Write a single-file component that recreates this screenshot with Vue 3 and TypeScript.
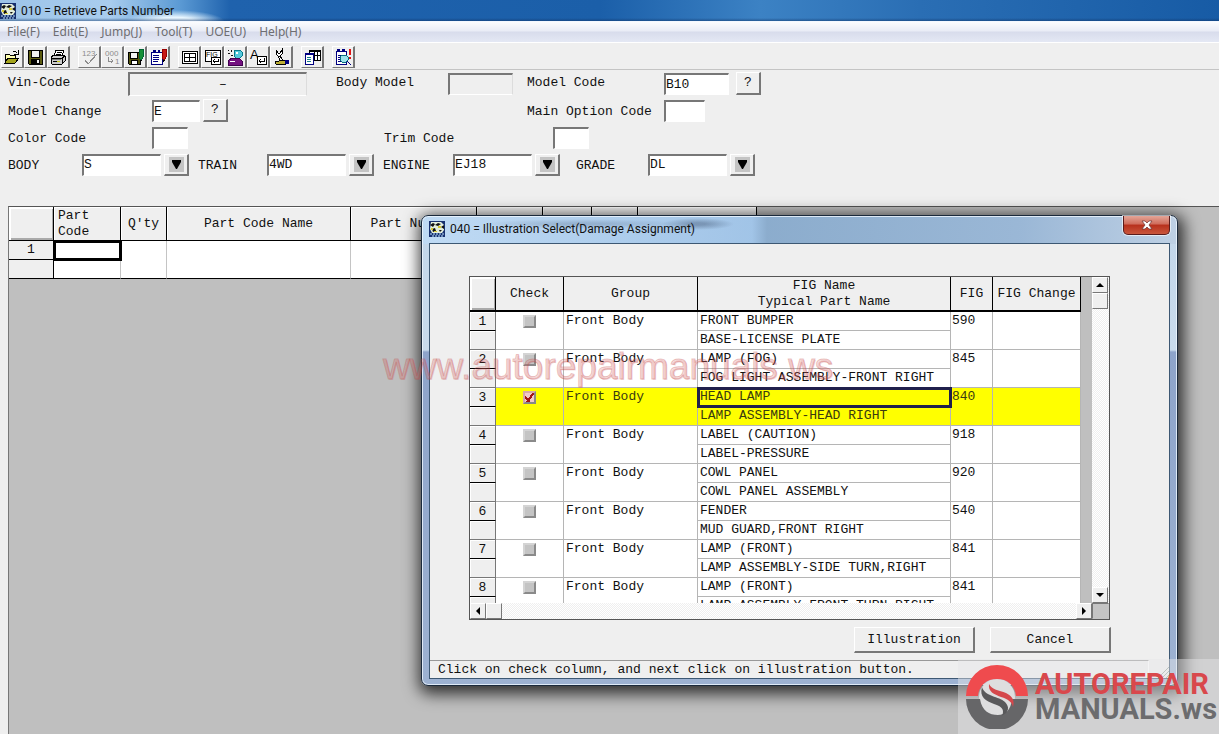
<script setup lang="ts">
import { ref } from 'vue'

interface Shape {
  d?: string
  fill?: string
  stroke?: string
  text?: string
  x?: number
  y?: number
  size?: number
}
interface Tool {
  name: string
  disabled?: boolean
  shapes: Shape[]
}
interface Fig {
  group: string
  name: string
  part: string
  fig: string
  checked: boolean
}

const menus = ['File(F)', 'Edit(E)', 'Jump(J)', 'Tool(T)', 'UOE(U)', 'Help(H)']

const toolGroups: Tool[][] = [
  [
    {
      name: 'Open',
      shapes: [
        { d: 'M1 14V5h4l1 1h5v3', fill: '#ffffb0', stroke: '#000' },
        { d: 'M1 14L4 9h11l-4 5z', fill: '#a3a31c', stroke: '#000' },
        { d: 'M9 3q2-2 4 1M14 1v4h-4', fill: 'none', stroke: '#000' },
      ],
    },
    {
      name: 'Save',
      shapes: [
        { d: 'M1 1h14v14H2l-1-1z', fill: '#5c5c10', stroke: '#000' },
        { d: 'M4 1h8v7H4z', fill: '#efefef', stroke: '#000' },
        { d: 'M4 10h9v5H4z', fill: '#000' },
        { d: 'M10 11h2v3h-2z', fill: '#efefef' },
      ],
    },
    {
      name: 'Print',
      shapes: [
        { d: 'M4 7L6 1h8l-2 6z', fill: '#fff', stroke: '#000' },
        { d: 'M7 3h5M6 5h5', stroke: '#000' },
        { d: 'M1 8l3-2h9l2 1v5l-3 3H2l-1-2z', fill: '#ccc', stroke: '#000' },
        { d: 'M1 9h11v5M12 9l3-2M3 12h7', fill: 'none', stroke: '#000' },
        { d: 'M2 10h9v1H2z', fill: '#777' },
        { d: 'M7 12h3v1H7z', fill: '#c8c818' },
      ],
    },
  ],
  [
    {
      name: 'Check numbers',
      disabled: true,
      shapes: [
        { text: '123', x: 1, y: 7, size: 8, fill: '#8c8c8c' },
        { d: 'M4 11l3 4 9-10', fill: 'none', stroke: '#8c8c8c' },
      ],
    },
    {
      name: 'Replace numbers',
      disabled: true,
      shapes: [
        { text: '000', x: 1, y: 7, size: 8, fill: '#8c8c8c' },
        { d: 'M4 8v4h5M7 10l2 2-2 2', fill: 'none', stroke: '#8c8c8c' },
        { text: '1', x: 11, y: 15, size: 8, fill: '#8c8c8c' },
      ],
    },
    {
      name: 'Save list',
      shapes: [
        { d: 'M1 3h12v12H2l-1-1z', fill: '#53530c', stroke: '#000' },
        { d: 'M3 3h7v6H3z', fill: '#f4f4f4', stroke: '#000' },
        { d: 'M4 11h6v4H4z', fill: '#fff', stroke: '#000' },
        { d: 'M12 0h4v8l-2 4-2-4z', fill: '#168f36', stroke: '#063' },
        { d: 'M13 11h2l-1 3z', fill: '#000' },
      ],
    },
    {
      name: 'Edit list',
      shapes: [
        { d: 'M1 3h11v12H1z', fill: '#fff', stroke: '#000080' },
        { d: 'M3 1h3v3H3zM8 1h2v3H8z', fill: '#000080' },
        { d: 'M3 6h6M3 8h6M3 10h6M3 12h5', stroke: '#000080' },
        { d: 'M12 0h4v8l-2 4-2-4z', fill: '#c81818', stroke: '#900' },
        { d: 'M13 11h2l-1 3z', fill: '#000' },
      ],
    },
  ],
  [
    {
      name: 'Grid',
      shapes: [
        { d: 'M1 2h15v12H1z', fill: '#fff', stroke: '#000' },
        { d: 'M3 4h11v8H3zM8 4v8M3 8h11', fill: 'none', stroke: '#000' },
      ],
    },
    {
      name: 'Figure index',
      shapes: [
        { d: 'M1 1h15v11H1z', fill: '#fff', stroke: '#000' },
        { text: 'FIG', x: 2, y: 8, size: 7, fill: '#000' },
        { d: 'M7 8h9v7H7z', fill: '#fff', stroke: '#000' },
        { d: 'M14 10v2H9M11 10l-2 2 2 2', fill: 'none', stroke: '#000' },
      ],
    },
    {
      name: 'Search',
      shapes: [
        { d: 'M1 1l1 1M4 1l1 2M1 5l2-1M4 6l2 1', stroke: '#111' },
        { d: 'M8 1h5l2 2v4l-2 2H9L7 7V3z', fill: '#55c8dc', stroke: '#087b8c' },
        { d: 'M9 3h2v2H9z', fill: '#fff' },
        { d: 'M1 12l4-3h7l3 3v4H1z', fill: '#741180', stroke: '#400050' },
        { d: 'M3 12h5', stroke: '#fff' },
      ],
    },
    {
      name: 'Name entry',
      shapes: [
        { text: 'A', x: 0, y: 10, size: 13, fill: '#000' },
        { d: 'M7 7h9v8H7z', fill: '#fff', stroke: '#000' },
        { d: 'M14 9v3H9M11 10l-2 2 2 2', fill: 'none', stroke: '#000' },
      ],
    },
    {
      name: 'Repair',
      shapes: [
        { d: 'M3 1v4l2 2h2l2-2V1L7 4H5zM5 7l3 6h3L7 7', fill: '#fff', stroke: '#000' },
        { d: 'M2 12h4l3-1 3 1v3H3z', fill: '#bcae35', stroke: '#000' },
        { d: 'M12 11h4v4h-4z', fill: '#00007c' },
      ],
    },
  ],
  [
    {
      name: 'Copy table',
      shapes: [
        { d: 'M5 1h11v10H5z', fill: '#fff', stroke: '#000' },
        { d: 'M5 2h11M8 6h8M10 2v9M13 2v9', stroke: '#000' },
        { d: 'M1 4h8v11H1z', fill: '#fff', stroke: '#000080' },
        { d: 'M1 5h8', stroke: '#000080' },
        { d: 'M3 8h4M3 10h4M3 12h4', stroke: '#187e89' },
      ],
    },
  ],
  [
    {
      name: 'Find',
      shapes: [
        { d: 'M1 2h10v13H1z', fill: '#fff', stroke: '#000080' },
        { d: 'M2 0h3v3H2zM7 0h3v3H7z', fill: '#000080' },
        { d: 'M3 6h3M3 8h2M3 10h2M3 12h3', stroke: '#000080' },
        { d: 'M7 6h4l2 2v3l-2 2H7l-2-2V8z', fill: '#9de2ec', stroke: '#08717c' },
        { d: 'M12 12l4 4', stroke: '#000080' },
        { d: 'M14 0h2v6h-2zM14 8h2v2h-2z', fill: '#e01414' },
      ],
    },
  ],
]

const selectors = [
  { id: 'body', label: 'BODY', value: 'S' },
  { id: 'train', label: 'TRAIN', value: '4WD' },
  { id: 'engine', label: 'ENGINE', value: 'EJ18' },
  { id: 'grade', label: 'GRADE', value: 'DL' },
]

const figs = ref<Fig[]>([
  { group: 'Front Body', name: 'FRONT BUMPER', part: 'BASE-LICENSE PLATE', fig: '590', checked: false },
  { group: 'Front Body', name: 'LAMP (FOG)', part: 'FOG LIGHT ASSEMBLY-FRONT RIGHT', fig: '845', checked: false },
  { group: 'Front Body', name: 'HEAD LAMP', part: 'LAMP ASSEMBLY-HEAD RIGHT', fig: '840', checked: true },
  { group: 'Front Body', name: 'LABEL (CAUTION)', part: 'LABEL-PRESSURE', fig: '918', checked: false },
  { group: 'Front Body', name: 'COWL PANEL', part: 'COWL PANEL ASSEMBLY', fig: '920', checked: false },
  { group: 'Front Body', name: 'FENDER', part: 'MUD GUARD,FRONT RIGHT', fig: '540', checked: false },
  { group: 'Front Body', name: 'LAMP (FRONT)', part: 'LAMP ASSEMBLY-SIDE TURN,RIGHT', fig: '841', checked: false },
  { group: 'Front Body', name: 'LAMP (FRONT)', part: 'LAMP ASSEMBLY-FRONT TURN,RIGHT', fig: '841', checked: false },
])
</script>

<template>
  <div class="app">
    <header class="titlebar">
      <svg class="app-icon" viewBox="0 0 16 16" aria-hidden="true">
        <path d="M0 0h16v16H0z" fill="#17306e" />
        <path d="M2 1h10l3 3v5l-2 3H3L1 8z" fill="#e4eedc" />
        <path d="M1 4l3-2 2 1-2 3zM6 4l3-2 3 1-3 2zM12 6l3-2v4zM3 8l3-1 1 3-3 1zM10 9h3l-2 2z" fill="#111" />
        <path d="M2 7h2v2H2zM9 5h3v2H9zM5 10h3v1H5z" fill="#d7c832" />
        <path d="M1 13h14M3 15h11" stroke="#bfe3ff" stroke-dasharray="2 1" />
      </svg>
      <h1>010 = Retrieve Parts Number</h1>
    </header>

    <nav class="menubar">
      <button v-for="m in menus" :key="m" type="button">{{ m }}</button>
    </nav>

    <div class="toolbar">
      <div v-for="(group, gi) in toolGroups" :key="gi" class="tool-group">
        <button
          v-for="tool in group"
          :key="tool.name"
          type="button"
          class="tool"
          :aria-label="tool.name"
          :disabled="tool.disabled"
        >
          <svg viewBox="0 0 17 17" aria-hidden="true">
            <template v-for="(s, si) in tool.shapes" :key="si">
              <text v-if="s.text" :x="s.x" :y="s.y" :font-size="s.size" :fill="s.fill">{{ s.text }}</text>
              <path v-else :d="s.d" :fill="s.fill ?? 'none'" :stroke="s.stroke ?? 'none'" />
            </template>
          </svg>
        </button>
      </div>
    </div>

    <form class="criteria" @submit.prevent>
      <div class="row row-vin">
        <label for="vin">Vin-Code</label>
        <input id="vin" class="field wide" value="–" readonly />
        <label for="bodymodel">Body Model</label>
        <input id="bodymodel" class="field" readonly />
        <label for="modelcode">Model Code</label>
        <input id="modelcode" class="field" value="B10" />
        <button type="button" class="ask" aria-label="Look up model code">?</button>
      </div>
      <div class="row row-change">
        <label for="change">Model Change</label>
        <input id="change" class="field short" value="E" />
        <button type="button" class="ask" aria-label="Look up model change">?</button>
        <label for="option">Main Option Code</label>
        <input id="option" class="field tiny" />
      </div>
      <div class="row row-color">
        <label for="color">Color Code</label>
        <input id="color" class="field mini" />
        <label for="trim">Trim Code</label>
        <input id="trim" class="field mini" />
      </div>
      <div class="row row-select">
        <template v-for="s in selectors" :key="s.id">
          <label :for="s.id">{{ s.label }}</label>
          <div class="combo">
            <select :id="s.id" class="field">
              <option>{{ s.value }}</option>
            </select>
            <button type="button" :aria-label="`Open ${s.label}`">
              <svg viewBox="0 0 15 15" aria-hidden="true"><path d="M3 3h9v2L8 12H7L3 5z" /></svg>
            </button>
          </div>
        </template>
      </div>
    </form>

    <main class="workspace">
      <table class="parts">
        <colgroup>
          <col class="p-num" /><col class="p-code" /><col class="p-qty" /><col class="p-name" />
          <col class="p-number" /><col class="p-a" /><col class="p-b" /><col class="p-c" /><col class="p-d" />
        </colgroup>
        <thead>
          <tr>
            <th class="corner"></th>
            <th class="left">Part<br />Code</th>
            <th>Q'ty</th>
            <th>Part Code Name</th>
            <th>Part Number</th>
            <th></th>
            <th></th>
            <th></th>
            <th></th>
          </tr>
        </thead>
        <tbody>
          <tr v-for="r in 2" :key="r">
            <th>{{ r === 1 ? '1' : '' }}</th>
            <td v-for="c in 8" :key="c" :class="{ current: r === 1 && c === 1 }"></td>
          </tr>
        </tbody>
      </table>
    </main>

    <section class="dialog" role="dialog" aria-labelledby="dlg-title">
      <header class="dialog-title">
        <svg class="app-icon" viewBox="0 0 16 16" aria-hidden="true">
          <path d="M0 0h16v16H0z" fill="#17306e" />
          <path d="M2 1h10l3 3v5l-2 3H3L1 8z" fill="#e4eedc" />
          <path d="M1 4l3-2 2 1-2 3zM6 4l3-2 3 1-3 2zM12 6l3-2v4zM3 8l3-1 1 3-3 1zM10 9h3l-2 2z" fill="#111" />
          <path d="M2 7h2v2H2zM9 5h3v2H9zM5 10h3v1H5z" fill="#d7c832" />
          <path d="M1 13h14M3 15h11" stroke="#bfe3ff" stroke-dasharray="2 1" />
        </svg>
        <h2 id="dlg-title">040 = Illustration Select(Damage Assignment)</h2>
        <button type="button" class="close" aria-label="Close">
          <svg viewBox="0 0 12 10" aria-hidden="true">
            <path d="M1 1h3l2 2 2-2h3L8 5l3 4H8L6 7 4 9H1l3-4z" fill="#fff" stroke="#6b3030" stroke-width=".7" />
          </svg>
        </button>
      </header>

      <div class="client">
        <div class="list">
          <div class="viewport">
            <table class="figs">
              <colgroup>
                <col class="f-num" /><col class="f-check" /><col class="f-group" />
                <col class="f-name" /><col class="f-fig" /><col class="f-change" />
              </colgroup>
              <thead>
                <tr>
                  <th class="corner"></th>
                  <th>Check</th>
                  <th>Group</th>
                  <th class="two-line">FIG Name<br />Typical Part Name</th>
                  <th>FIG</th>
                  <th>FIG Change</th>
                </tr>
              </thead>
              <tbody v-for="(f, i) in figs" :key="i" :class="{ marked: f.checked }">
                <tr>
                  <th class="num">{{ i + 1 }}</th>
                  <td rowspan="2" class="check">
                    <input v-model="f.checked" type="checkbox" :aria-label="`Check ${f.name}`" />
                  </td>
                  <td rowspan="2" class="group">{{ f.group }}</td>
                  <td class="name">{{ f.name }}</td>
                  <td rowspan="2" class="fig">{{ f.fig }}</td>
                  <td rowspan="2"></td>
                </tr>
                <tr>
                  <th></th>
                  <td class="name part">{{ f.part }}</td>
                </tr>
              </tbody>
            </table>
          </div>
          <div class="vbar">
            <button type="button" aria-label="Scroll up"><svg viewBox="0 0 8 8"><path d="M0 6h8L4 2z" /></svg></button>
            <span class="thumb"></span>
            <button type="button" class="end" aria-label="Scroll down"><svg viewBox="0 0 8 8"><path d="M0 2h8L4 6z" /></svg></button>
          </div>
          <div class="hbar">
            <button type="button" aria-label="Scroll left"><svg viewBox="0 0 8 8"><path d="M6 0v8L2 4z" /></svg></button>
            <span class="thumb"></span>
            <button type="button" class="end" aria-label="Scroll right"><svg viewBox="0 0 8 8"><path d="M2 0v8l4-4z" /></svg></button>
          </div>
          <div class="size-corner"></div>
        </div>
        <div class="actions">
          <button type="button">Illustration</button>
          <button type="button">Cancel</button>
        </div>
        <footer class="status">
          <p>Click on check column, and next click on illustration button.</p>
          <svg viewBox="0 0 12 12" aria-hidden="true"><path d="M1 12L12 1M5 12l7-7M9 12l3-3" stroke="#9aa89f" fill="none" /></svg>
        </footer>
      </div>
    </section>

    <div class="watermark">www.autorepairmanuals.ws</div>
    <div class="brand">
      <svg viewBox="0 0 64 64" aria-hidden="true">
        <circle cx="32" cy="32" r="18" fill="#dededf" />
        <path d="M1 31a31 31 0 0 1 62 0H51C50 20 42 14 32 14S14 20 13 31z" fill="#ef4b4e" />
        <path d="M1 34h14c2 12 9 16 18 16 7 0 13-5 14-16h16a31 31 0 0 1-62 0z" fill="#666668" />
        <path d="M17 22c-3 10 4 14 12 17 6 2 9 4 9 8 0 3-2 4-2 4 8-3 9-9 4-14-6-6-20-5-23-15z" fill="#59595b" />
        <path d="M24 19c-1 8 5 10 12 13 7 2 11 5 12 10 2-7-1-11-7-14-7-3-14-3-17-9z" fill="#d5484c" />
      </svg>
      <p><span class="auto">AUTOREPAIR</span><span class="manuals">MANUALS.ws</span></p>
    </div>
  </div>
</template>

<style>
html,
body {
  margin: 0;
  background: #efefef;
}
</style>

<style scoped>
* {
  box-sizing: border-box;
}
.app {
  position: relative;
  display: flex;
  flex-direction: column;
  min-height: 100vh;
  overflow: hidden;
  background: #efefef;
  color: #111;
  font: 13px/16px 'Liberation Mono', 'Courier New', monospace;
}
button,
input,
select {
  margin: 0;
  padding: 0;
  border-radius: 0;
  color: inherit;
  font: inherit;
}
h1,
h2,
p {
  margin: 0;
  font-weight: 400;
}
.titlebar {
  display: flex;
  align-items: center;
  gap: 5px;
  height: 22px;
  border-bottom: 1px solid #f4f8ff;
  background:
    linear-gradient(transparent 18px, rgba(15, 50, 100, 0.5)),
    radial-gradient(ellipse 50px 12px at 175px 22px, #e8f6ff 40%, transparent),
    linear-gradient(90deg, #9cc3e8 0, #a9cdee 110px, #5b9ad4 180px, #1f62ad 230px, #1b5fa9 600px, #3c82c4 760px, #2a6eb4 920px, #175ba5 100%);
}
.app-icon {
  width: 16px;
  height: 16px;
}
.menubar {
  display: flex;
  gap: 13px;
  align-items: center;
  height: 20px;
  padding: 0 7px;
  background: linear-gradient(#fbfcfe, #e9ecf6 45%, #d8dcec 50%, #e4e8f4);
  font: 12px/16px 'Noto Sans', 'Open Sans', sans-serif;
}
h1,
h2 {
  font: 12px/16px Roboto, 'Open Sans', sans-serif;
}
.menubar button {
  border: 0;
  background: none;
  color: #6e6e72;
}
.toolbar {
  display: flex;
  gap: 8px;
  height: 28px;
  padding: 3px 0 0 1px;
  border-top: 1px solid #fff;
  border-bottom: 1px solid #c4c4c4;
}
.tool-group {
  display: flex;
}
.tool {
  display: flex;
  align-items: center;
  justify-content: center;
  width: 23px;
  height: 22px;
  border: 1px solid;
  border-color: #fff #777 #777 #fff;
  border-right-width: 2px;
  background: #efefef;
}
.tool svg {
  width: 17px;
  height: 17px;
  overflow: visible;
  shape-rendering: crispEdges;
}
.tool text {
  font-family: 'Liberation Sans', Arial, sans-serif;
}

.criteria {
  height: 136px;
}
.row {
  display: grid;
  align-items: center;
  justify-items: start;
  height: 27px;
  padding-left: 8px;
}
.row label {
  padding-top: 2px;
  white-space: nowrap;
}
.row-vin label {
  padding: 0 0 2px;
}
.row-vin {
  grid-template-columns: 120px 208px 112px 79px 137px 72px 25px;
}
.row-change {
  grid-template-columns: 144px 51px 324px 137px 41px;
}
.row-color {
  grid-template-columns: 144px 232px 169px 36px;
}
.row-select {
  grid-template-columns: 74px 116px 69px 116px 70px 123px 72px 107px;
}
.field {
  width: 65px;
  height: 22px;
  border: 1px solid;
  border-color: #777 #fff #fff #777;
  border-top-width: 2px;
  border-left-width: 2px;
  outline: 0;
  background: #fff;
}
.field[readonly] {
  background: #efefef;
  border-right-color: #dcdcdc;
}
.field.wide {
  width: 179px;
  height: 24px;
  padding-left: 10px;
  text-align: center;
}
.field.short {
  width: 48px;
}
.field.tiny {
  width: 41px;
}
.field.mini {
  width: 36px;
}
.ask {
  width: 25px;
  height: 23px;
  border: 1px solid;
  border-color: #fff #777 #777 #fff;
  border-right-width: 2px;
  border-bottom-width: 2px;
  background: #efefef;
}
.combo {
  display: flex;
  gap: 3px;
}
.combo select {
  width: 79px;
  appearance: none;
}
.combo button {
  display: flex;
  align-items: center;
  justify-content: center;
  width: 25px;
  height: 22px;
  border: 1px solid;
  border-color: #fff #777 #777 #fff;
  border-right-width: 2px;
  border-bottom-width: 2px;
  background: #efefef;
}
.combo svg {
  width: 15px;
  height: 15px;
  background: #c4c4c4;
}

.workspace {
  flex: 1;
  margin-left: 8px;
  border-top: 1px solid #555;
  border-left: 1px solid #777;
  background: #bfbfbf;
}
table {
  border-spacing: 0;
  table-layout: fixed;
}
th,
td {
  padding: 0;
  font-weight: 400;
}
.parts {
  width: 748px;
}
.p-num { width: 45px; }
.p-code { width: 67px; }
.p-qty { width: 46px; }
.p-name { width: 184px; }
.p-number { width: 126px; }
.p-a { width: 66px; }
.p-b { width: 49px; }
.p-c { width: 46px; }
.p-d { width: 119px; }
.parts th {
  height: 19px;
  border-right: 1px solid #000;
  border-bottom: 1px solid #000;
  background: #efefef;
}
.parts thead th {
  height: 34px;
  box-shadow: inset 1px 1px #fff;
}
.parts th.left {
  padding: 1px 0 0 4px;
  text-align: left;
}
.parts td {
  border-right: 1px solid #c4c4c4;
  background: #fff;
}
.parts tr:last-child td {
  border-bottom: 1px solid #000;
}
.parts thead .corner,
.figs thead .corner {
  box-shadow: inset 2px 2px #fff, inset -1px -2px #aaa;
}
.parts .current {
  outline: 3px solid #000;
  outline-offset: -2px;
}

.dialog {
  position: absolute;
  top: 215px;
  left: 421px;
  width: 757px;
  padding: 0 7px 6px;
  border: 1px solid #1b2a3c;
  border-radius: 7px;
  background:
    radial-gradient(ellipse 36px 6px at 276px 8px, rgba(70, 90, 120, 0.45) 20%, transparent) 0 0 / 100% 28px no-repeat,
    radial-gradient(ellipse 100px 5px at 160px 8px, rgba(70, 90, 120, 0.25) 20%, transparent) 0 0 / 100% 28px no-repeat,
    linear-gradient(90deg, rgba(190, 220, 248, 0.7) 0, rgba(150, 190, 230, 0.75) 330px, rgba(130, 165, 200, 0.85) 345px, rgba(150, 180, 212, 0.9) 600px, rgba(190, 208, 228, 0.95) 100%) 0 0 / 100% 28px no-repeat,
    linear-gradient(#c2d6ea 0, #c9dbec 134px, #8ea4ca 136px, #9db2d2);
  box-shadow:
    inset 0 0 0 1px rgba(240, 248, 255, 0.8),
    2px 4px 16px 4px rgba(0, 0, 0, 0.75);
}
.dialog-title {
  display: flex;
  align-items: center;
  gap: 5px;
  height: 27px;
  padding-bottom: 2px;
}
.close {
  display: flex;
  align-items: center;
  justify-content: center;
  align-self: flex-start;
  width: 47px;
  height: 19px;
  margin-left: auto;
  border: 1px solid #5a1c1c;
  border-top: 0;
  border-radius: 0 0 5px 5px;
  background: linear-gradient(#e4a597, #cf6b5a 45%, #b7301c 50%, #c9563c);
  box-shadow: 0 0 0 1px rgba(255, 255, 255, 0.6);
}
.close svg {
  width: 12px;
  height: 10px;
}
.client {
  border: 1px solid #3d5873;
  background: #efefef;
}
.list {
  display: grid;
  grid-template-columns: 1fr 17px;
  grid-template-rows: 326px 16px;
  margin: 32px 59px 7px 39px;
  border: 1px solid #555;
  background: #f7f7f7;
}
.viewport {
  overflow: hidden;
  background: #bfbfbf;
}
.figs {
  width: 611px;
}
.f-num { width: 26px; }
.f-check { width: 68px; }
.f-group { width: 134px; }
.f-name { width: 253px; }
.f-fig { width: 42px; }
.f-change { width: 88px; }
.figs thead th {
  height: 35px;
  border-right: 1px solid #000;
  border-bottom: 2px solid #000;
  background: #efefef;
  white-space: nowrap;
}
.figs thead .two-line {
  padding-top: 1px;
}
.figs tbody th {
  height: 19px;
  border-right: 1px solid #777;
  border-bottom: 1px solid #777;
  background: #efefef;
  box-shadow: inset 1px 1px #fff;
}
.figs tbody th.num {
  padding-top: 2px;
  border-bottom-color: #000;
}
.figs td {
  height: 19px;
  border-right: 1px solid #b5b5b5;
  border-bottom: 1px solid #b5b5b5;
  background: #fff;
  line-height: 18px;
  vertical-align: top;
  white-space: nowrap;
}
.figs .marked td {
  background: #ff0;
  color: #3a3a10;
}
.figs .group,
.figs .name {
  padding-left: 2px;
}
.figs .fig {
  padding-left: 1px;
}
.figs .marked .name:not(.part) {
  position: relative;
  outline: 3px solid #20204c;
  outline-offset: -2px;
}
.check input {
  display: block;
  width: 13px;
  height: 13px;
  margin: 3px auto 0;
  border: 2px solid;
  border-color: #d4d4d4 #8a8a8a #8a8a8a #d4d4d4;
  appearance: none;
  background: #c4c4c4;
}
.check input:checked {
  border-color: #d8a8a8 #888 #888 #d8a8a8;
  background:
    linear-gradient(125deg, transparent 47%, #a31515 47% 65%, transparent 65%),
    linear-gradient(50deg, transparent 25%, #a31515 25% 45%, transparent 45%) 0 0 / 5px 9px no-repeat,
    #f1caca;
}
.vbar,
.hbar {
  display: flex;
  background: repeating-conic-gradient(#fff 0 25%, #efefef 0 50%) 0 0 / 2px 2px;
}
.vbar {
  flex-direction: column;
}
.vbar button,
.hbar button,
.thumb {
  display: flex;
  align-items: center;
  justify-content: center;
  width: 16px;
  height: 16px;
  border: 1px solid;
  border-color: #fff #777 #777 #fff;
  background: #efefef;
}
.vbar svg,
.hbar svg {
  width: 8px;
  height: 8px;
}
.end {
  margin-top: auto;
}
.hbar .end {
  margin: 0 0 0 auto;
}
.size-corner {
  border: 1px solid;
  border-color: #777 transparent transparent #777;
  background: #c4c4c4;
}
.actions {
  display: flex;
  justify-content: flex-end;
  gap: 15px;
  margin-right: 58px;
}
.actions button {
  width: 121px;
  height: 26px;
  border: 1px solid;
  border-color: #fff #777 #777 #fff;
  border-right-width: 2px;
  border-bottom-width: 2px;
  background: #efefef;
}
.status {
  display: flex;
  align-items: flex-end;
  justify-content: space-between;
  margin-top: 7px;
}
.status p {
  flex: 1;
  margin-right: 8px;
  padding: 1px 8px 0;
  border-top: 1px solid #999;
  border-right: 1px solid #fff;
}
.status svg {
  width: 12px;
  height: 12px;
}

.watermark {
  position: absolute;
  top: 347px;
  left: 383px;
  color: rgba(225, 110, 110, 0.2);
  font: 37px/40px 'Liberation Sans', Arial, sans-serif;
  text-shadow: 1px 1px rgba(200, 90, 90, 0.2);
  -webkit-text-stroke: 1px rgba(190, 60, 60, 0.3);
  pointer-events: none;
}
.brand {
  position: absolute;
  right: 0;
  bottom: 0;
  display: flex;
  align-items: center;
  gap: 6px;
  width: 261px;
  height: 75px;
  padding-left: 7px;
  background: rgba(230, 230, 232, 0.45);
  pointer-events: none;
}
.brand > svg {
  flex: none;
  width: 64px;
  height: 64px;
}
.brand span {
  display: block;
  font: 700 29px/25px Roboto, 'Liberation Sans', sans-serif;
}
.brand .auto {
  color: #d9484c;
}
.brand .manuals {
  color: #6c6c6e;
}
</style>
